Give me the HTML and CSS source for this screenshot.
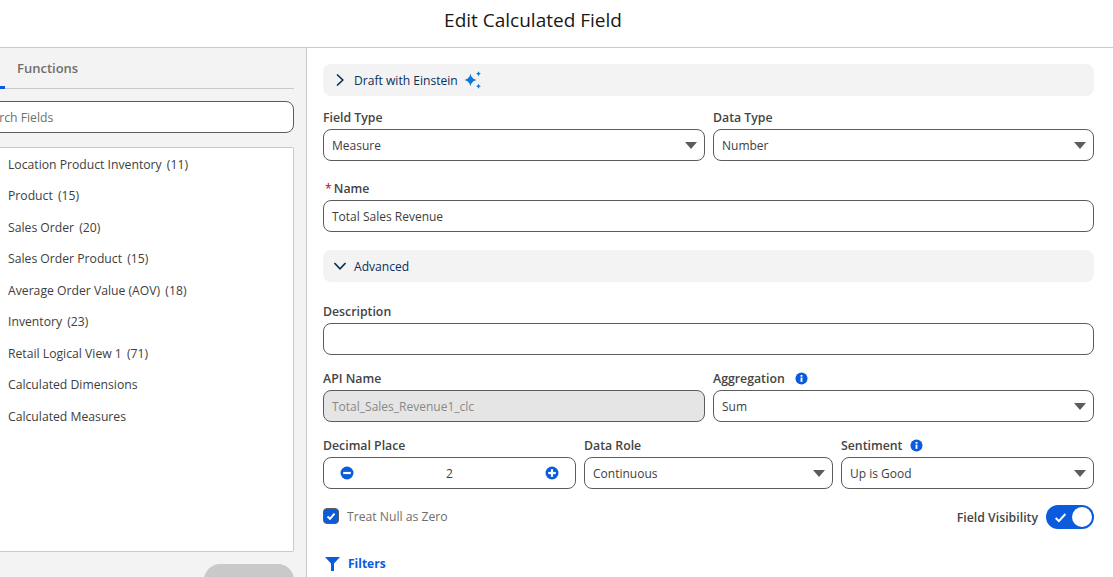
FILE: index.html
```html
<!DOCTYPE html>
<html lang="en">
<head>
  <meta charset="UTF-8" />
  <title>Edit Calculated Field</title>
  <link rel="stylesheet" href="styles.css">
</head>
<body>
  <header class="modal-header">Edit Calculated Field</header>

  <div class="modal-body">
    <aside class="side-panel">
      <div class="tabs">
        <span class="tab-active-mark"></span>
        <span class="tab">Functions</span>
      </div>
      <input class="search" type="text" placeholder="Search Fields" />
      <ul class="field-list">
        <li>Location Product Inventory <span class="count">(11)</span></li>
        <li>Product <span class="count">(15)</span></li>
        <li>Sales Order <span class="count">(20)</span></li>
        <li>Sales Order Product <span class="count">(15)</span></li>
        <li>Average Order Value (AOV) <span class="count">(18)</span></li>
        <li>Inventory <span class="count">(23)</span></li>
        <li>Retail Logical View 1 <span class="count">(71)</span></li>
        <li>Calculated Dimensions</li>
        <li>Calculated Measures</li>
      </ul>
      <div class="side-footer"><button class="apply-button"></button></div>
    </aside>

    <main class="form">
      <div class="section-bar bar-einstein">
        <svg class="chevron" viewBox="0 0 12 12"><path d="M3 0.5 L8.8 6 L3 11.5" /></svg>
        <span>Draft with Einstein</span>
        <svg class="sparkle" viewBox="0 0 18 18">
          <path d="M6.5 2.5 C7.2 6 8.5 7.6 12.5 9 C8.5 10.4 7.2 12 6.5 15.5 C5.8 12 4.5 10.4 0.5 9 C4.5 7.6 5.8 6 6.5 2.5 Z" />
          <path d="M14.5 0 C14.8 1.6 15.4 2.3 17 2.7 C15.4 3.1 14.8 3.8 14.5 5.4 C14.2 3.8 13.6 3.1 12 2.7 C13.6 2.3 14.2 1.6 14.5 0 Z" />
          <path d="M14.5 12.6 C14.8 14.2 15.4 14.9 17 15.3 C15.4 15.7 14.8 16.4 14.5 18 C14.2 16.4 13.6 15.7 12 15.3 C13.6 14.9 14.2 14.2 14.5 12.6 Z" />
        </svg>
      </div>

      <div class="row two-col row-type">
        <div class="field">
          <label>Field Type</label>
          <div class="control select">Measure</div>
        </div>
        <div class="field">
          <label>Data Type</label>
          <div class="control select">Number</div>
        </div>
      </div>

      <div class="field row-name">
        <label><span class="required">*</span>Name</label>
        <div class="control">Total Sales Revenue</div>
      </div>

      <div class="section-bar bar-advanced">
        <svg class="chevron" viewBox="0 0 12 12"><path d="M0.5 3 L6 8.8 L11.5 3" /></svg>
        <span>Advanced</span>
      </div>

      <div class="field row-description">
        <label>Description</label>
        <div class="control"></div>
      </div>

      <div class="row two-col row-api">
        <div class="field">
          <label>API Name</label>
          <div class="control disabled">Total_Sales_Revenue1_clc</div>
        </div>
        <div class="field">
          <label>Aggregation
            <svg class="info info-aggregation" viewBox="0 0 14 14"><circle cx="7" cy="7" r="6.5" /><rect x="6" y="6" width="2" height="4.6" /><rect x="6" y="3.2" width="2" height="1.9" /></svg>
          </label>
          <div class="control select">Sum</div>
        </div>
      </div>

      <div class="row three-col row-decimal">
        <div class="field">
          <label>Decimal Place</label>
          <div class="control stepper">
            <svg class="step-icon" viewBox="0 0 14 14"><circle cx="7" cy="7" r="6.5" /><rect x="3.2" y="5.9" width="7.6" height="2.2" /></svg>
            <span>2</span>
            <svg class="step-icon" viewBox="0 0 14 14"><circle cx="7" cy="7" r="6.5" /><rect x="3.2" y="5.9" width="7.6" height="2.2" /><rect x="5.9" y="3.2" width="2.2" height="7.6" /></svg>
          </div>
        </div>
        <div class="field">
          <label>Data Role</label>
          <div class="control select">Continuous</div>
        </div>
        <div class="field">
          <label>Sentiment
            <svg class="info info-sentiment" viewBox="0 0 14 14"><circle cx="7" cy="7" r="6.5" /><rect x="6" y="6" width="2" height="4.6" /><rect x="6" y="3.2" width="2" height="1.9" /></svg>
          </label>
          <div class="control select">Up is Good</div>
        </div>
      </div>

      <div class="row options-row">
        <div class="null-option">
          <span class="checkbox"><svg viewBox="0 0 12 12"><path d="M2.5 6.5 L5 8.8 L9.5 3.6" /></svg></span>
          <span>Treat Null as Zero</span>
        </div>
        <div class="visibility">
          <span>Field Visibility</span>
          <span class="toggle">
            <svg viewBox="0 0 12 12"><path d="M1.5 6.5 L4.5 9.3 L10.5 2.8" /></svg>
            <span class="knob"></span>
          </span>
        </div>
      </div>

      <div class="filters">
        <svg viewBox="0 0 15 14"><path d="M0 0 H15 L9 6.5 V14 H6 V6.5 Z" /></svg>
        <span>Filters</span>
      </div>
    </main>
  </div>
</body>
</html>
```

FILE: styles.css
```css
* {
  box-sizing: border-box;
}

html, body {
  height: 577px;
  overflow: hidden;
}

body {
  margin: 0;
  background-color: #fff;
  color: #3e3e3c;
  font-family: "Open Sans", "Noto Sans", Arial, sans-serif;
  font-size: 12px;
}

.modal-header {
  height: 48px;
  border-bottom: 1px solid #c9c9c9;
  padding-top: 7px;
  padding-right: 47px;
  text-align: center;
  font-size: 19px;
  line-height: 26px;
  color: #181818;
}

.modal-body {
  display: flex;
  height: 529px;
}

/* left panel */
.side-panel {
  width: 307px;
  flex-shrink: 0;
  background-color: #f3f3f3;
  border-right: 1px solid #c9c9c9;
  padding-right: 12px;
  overflow: hidden;
}

.tabs {
  display: flex;
  align-items: flex-start;
  height: 41px;
  border-bottom: 1px solid #c9c9c9;
  position: relative;
}

.tab {
  margin-left: 17px;
  margin-top: 11px;
  font-size: 13px;
  font-weight: 600;
  line-height: 18px;
  color: #706e6b;
}

.tab-active-mark {
  position: absolute;
  left: 0;
  bottom: -1px;
  width: 5px;
  height: 3px;
  background-color: #0b5cdc;
}

.search {
  display: block;
  width: 328px;
  height: 32px;
  margin: 12px 0 14px -34px;
  padding: 0 12px;
  border: 1px solid #5c5c5c;
  border-radius: 8px;
  font: inherit;
  font-size: 12.2px;
  background-color: #fff;
}

.search::placeholder {
  color: #706e6b;
  opacity: 1;
}

.field-list {
  list-style: none;
  height: 405px;
  margin: 0;
  padding: 0.7px 0 0 8px;
  background-color: #fff;
  border: 1px solid #c9c9c9;
  border-left: none;
  border-radius: 0 2px 2px 0;
}

.field-list li {
  height: 31.5px;
  line-height: 31px;
  font-size: 12.2px;
  color: #3e3e3c;
}

.count {
  margin-left: 2px;
}

.side-footer {
  display: flex;
  justify-content: flex-end;
  margin-top: 12px;
}

.apply-button {
  width: 90px;
  height: 32px;
  border: none;
  border-radius: 16px;
  background-color: #c9c9c9;
}

/* right form */
.form {
  flex: 1;
  padding: 16px 19px 0 16px;
  min-width: 0;
}

.section-bar {
  display: flex;
  align-items: center;
  height: 32px;
  padding-left: 11px;
  border-radius: 8px;
  background-color: #f3f3f3;
  color: #0b2f5c;
  font-size: 12.1px;
}

.chevron {
  width: 12px;
  height: 12px;
  margin-right: 8px;
  fill: none;
  stroke: #0b2f5c;
  stroke-width: 1.6;
}

.sparkle {
  width: 18px;
  height: 18px;
  margin-left: 6px;
  fill: #0a78d6;
}

.row {
  display: grid;
  gap: 8px;
}

.two-col {
  grid-template-columns: 382px 381px;
}

.three-col {
  grid-template-columns: 253px 249px 253px;
}

.field label {
  display: block;
  height: 17px;
  margin-bottom: 3px;
  font-size: 12.3px;
  font-weight: 600;
  line-height: 17px;
  color: #444;
}

.control {
  display: flex;
  align-items: center;
  height: 32px;
  padding: 0 8px;
  border: 1px solid #5c5c5c;
  border-radius: 8px;
  background-color: #fff;
  line-height: 17px;
}

.select {
  position: relative;
}

.select::after {
  content: "";
  position: absolute;
  right: 7px;
  top: 12px;
  border-left: 6px solid transparent;
  border-right: 6px solid transparent;
  border-top: 7px solid #5c5c5c;
}

.disabled {
  background-color: #e5e5e5;
  color: #8a8886;
}

.required {
  color: #ba0517;
  font-weight: 400;
  margin: 0 2px 0 2px;
}

.info {
  width: 13px;
  height: 13px;
  vertical-align: -2px;
  fill: #0b5cdc;
}

.info-aggregation { margin-left: 7px; }
.info-sentiment { margin-left: 4px; }

.info rect, .step-icon rect {
  fill: #fff;
}

.stepper {
  justify-content: space-between;
  padding: 0 16px;
}

.step-icon {
  width: 14px;
  height: 14px;
  fill: #0b5cdc;
}

.row-type { margin-top: 13px; }
.row-name { margin-top: 19px; }
.bar-advanced { margin-top: 18px; }
.row-description { margin-top: 21px; }
.row-api { margin-top: 15px; }
.row-decimal { margin-top: 15px; }

.options-row {
  display: flex;
  justify-content: space-between;
  align-items: center;
  margin-top: 15px;
  height: 24px;
}

.null-option {
  display: flex;
  align-items: center;
  gap: 8px;
  font-size: 12.2px;
  color: #706e6b;
}

.checkbox {
  display: flex;
  align-items: center;
  justify-content: center;
  width: 16px;
  height: 16px;
  border: 1px solid #5c5c5c;
  border-radius: 4px;
  background-color: #0b5cdc;
}

.checkbox svg {
  width: 12px;
  height: 12px;
  fill: none;
  stroke: #fff;
  stroke-width: 2;
}

.visibility {
  display: flex;
  align-items: center;
  gap: 8px;
  margin-top: 2px;
  font-size: 12.3px;
  font-weight: 600;
  color: #444;
}

.toggle {
  position: relative;
  display: flex;
  align-items: center;
  width: 48px;
  height: 24px;
  padding-left: 8px;
  border-radius: 12px;
  background-color: #0b5cdc;
}

.toggle svg {
  width: 13px;
  height: 13px;
  fill: none;
  stroke: #fff;
  stroke-width: 1.8;
}

.knob {
  position: absolute;
  right: 2px;
  top: 2px;
  width: 20px;
  height: 20px;
  border-radius: 50%;
  background-color: #fff;
}

.filters {
  display: flex;
  align-items: center;
  gap: 8px;
  margin-top: 27px;
  padding-left: 2px;
  font-weight: 700;
  color: #0b5cdc;
}

.filters svg {
  width: 15px;
  height: 14px;
  fill: #0b5cdc;
}
```
